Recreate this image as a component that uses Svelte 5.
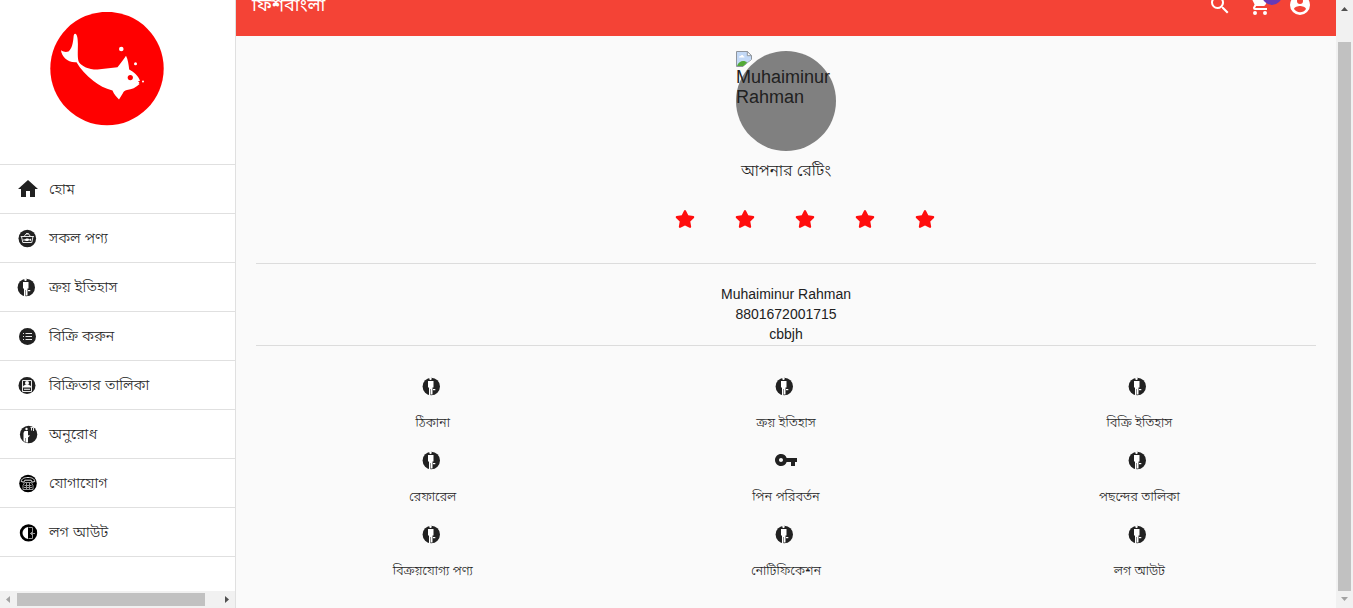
<script>
  const menu = [
    { label: 'হোম', icon: 'home' },
    { label: 'সকল পণ্য', icon: 'basket' },
    { label: 'ক্রয় ইতিহাস', icon: 'person' },
    { label: 'বিক্রি করুন', icon: 'list' },
    { label: 'বিক্রিতার তালিকা', icon: 'seller' },
    { label: 'অনুরোধ', icon: 'request' },
    { label: 'যোগাযোগ', icon: 'phone' },
    { label: 'লগ আউট', icon: 'door' }
  ];
  const tiles = [
    { label: 'ঠিকানা', icon: 'person' },
    { label: 'ক্রয় ইতিহাস', icon: 'person' },
    { label: 'বিক্রি ইতিহাস', icon: 'person' },
    { label: 'রেফারেল', icon: 'person' },
    { label: 'পিন পরিবর্তন', icon: 'key' },
    { label: 'পছন্দের তালিকা', icon: 'person' },
    { label: 'বিক্রয়যোগ্য পণ্য', icon: 'person' },
    { label: 'নোটিফিকেশন', icon: 'person' },
    { label: 'লগ আউট', icon: 'person' }
  ];
  const stars = [1, 2, 3, 4, 5];
</script>

{#snippet glyph(name)}
  <svg class="icon" viewBox="0 0 24 24" aria-hidden="true">
    {#if name === 'home'}
      <path d="M10 20v-6h4v6h5v-8h3L12 3 2 12h3v8z" />
    {:else if name === 'key'}
      <path d="M12.650 10A5.990 5.990 0 0 0 7 6c-3.310 0-6 2.690-6 6s2.690 6 6 6a5.990 5.990 0 0 0 5.650-4H17v4h4v-4h2v-4H12.650zM7 14c-1.100 0-2-.900-2-2s.900-2 2-2 2 .900 2 2-.900 2-2 2z" />
    {:else if name === 'person'}
      <circle cx="10.300" cy="12.500" r="8.700" />
      <circle class="w" cx="9.500" cy="4.700" r="1.200" />
      <path class="w" d="M7 6.900h5.500v6.600H11.500v7H9.800V15h-.5v6.500L8 21v-7.500H7z" />
      <path class="w" d="M12 15h2.300v1.200H12z" />
    {:else if name === 'basket'}
      <circle cx="11.300" cy="12.500" r="8.800" />
      <path class="l" d="M4.700 10.500h13.200M5.500 10.500l1.300 6h9l1.200-6M8 10.500l2-2.500h2.600l2 2.500M10 7.500h2.600" />
      <path class="w" d="m7.500 13 1.300.6 1.500-1h2l.8.8 2-1v2.600l-2-.8-1.300.7h-2l-1-.6-1.300.8z" />
    {:else if name === 'list'}
      <circle cx="11.500" cy="12.500" r="8.500" />
      <path class="l" d="M9.500 9.500h6.500M9.500 12.500h6.500M9.500 15.500h6.500M7 9.500h1M7 12.500h1M7 15.500h1" />
    {:else if name === 'seller'}
      <circle cx="11" cy="12.500" r="8.500" />
      <path class="l" d="M6.500 7.500h9v11h-9z" />
      <circle class="w" cx="11" cy="10" r="2" />
      <path class="w" d="M7 14.500v-1c.5-1.200 2-1.700 4-1.700s3.500.5 4 1.700v1zM8 15.800h6v1H8z" />
    {:else if name === 'request'}
      <circle cx="12.600" cy="12.500" r="8.700" />
      <circle class="w" cx="10.500" cy="7" r="1.200" />
      <path class="w" d="M8.500 9H12v4.500l1.500-.5v1L12 15.500v5H9.500V16H9v4L7.500 18.500V11z" />
      <path class="l" d="M14.500 5.500h3v3.500M15.500 6v2.500" />
    {:else if name === 'phone'}
      <circle class="k" cx="12" cy="12.500" r="8.800" />
      <path class="l" d="M5.200 10.500c0-2.800 3.300-4 6.800-4s6.800 1.200 6.800 4l-2.600.7-1-2H8.800l-1 2z" />
      <path class="g" d="M8.700 11.500h6.600l1.700 3v4h-10v-4zM8.500 14.500h7M8 16.500h8M10.500 12v6M13.500 12v6" />
    {:else}
      <circle class="k" cx="12.500" cy="12.900" r="8.700" />
      <path class="w" d="M12 7v12C8.500 18.300 6.500 16 6.500 13S8.500 7.700 12 7z" />
      <path class="g" d="M12.500 7.500h4v11h-4M14 13.500h5M15.500 12v3" />
    {/if}
  </svg>
{/snippet}

<div class="shell">
  <aside class="sidebar">
    <a class="brand" href="#home" aria-label="ফিশবাংলা">
      <svg viewBox="0 0 114 114" aria-hidden="true">
        <circle cx="57" cy="56.500" r="56.700" fill="#f00" />
        <g fill="#fff">
          <path d="M25.200 21.700c2 .5 2.700 5 2.700 10 0 8-.6 15 1.100 18.500 3 4 9.500 7.400 18.500 7.300L67.500 55.300C71 51 74 47 76 43.800c2 3.500 2.600 9 3.200 13.700 4.500 2.500 8.800 6 10.800 11.200l-2.300.8 1.800.8-.9.900 1 .8c-3.600 3.500-8 5.500-12.600 6-2.500.5-3.500 1.500-4 3L69 87.500c-2.500-3-5-5-6.500-9C55 76.500 49 73.500 43.500 69 36 63 30 56.500 26.500 50.200c-5 .3-8.500-1-11.300-3.700C12.700 44 11.300 41.500 11 38.300c2.500 1.700 5 2 7.500 1.200 3.500-3 4.500-8.500 5-14 .2-2.200.4-3.800 1.700-3.800z" />
          <circle cx="71.300" cy="37" r="2.300" />
          <circle cx="85.500" cy="51.800" r="1.500" />
          <circle cx="93" cy="69.600" r="1" />
        </g>
        <circle cx="80.300" cy="65.600" r="2.600" fill="#f00" />
      </svg>
    </a>
    <nav>
      {#each menu as item}
        <a class="item" href="#menu">{@render glyph(item.icon)}<span>{item.label}</span></a>
      {/each}
    </nav>
    <div class="hbar" aria-hidden="true">
      <svg viewBox="0 0 17 17"><path class="dim" d="M10 5v7L6 8.500z" /></svg>
      <div class="thumb"></div>
      <svg viewBox="0 0 17 17"><path d="M7 5v7l4-3.500z" /></svg>
    </div>
  </aside>

  <div class="page">
    <header>
      <div class="bar">
        <h1>ফিশবাংলা</h1>
        <div class="actions">
          <button aria-label="Search">
            <svg viewBox="0 0 24 24"><path d="M9.500 3A6.500 6.500 0 0 1 16 9.500c0 1.610-.590 3.090-1.560 4.230l.270.270h.790l5 5-1.500 1.500-5-5v-.790l-.270-.270A6.516 6.516 0 0 1 9.500 16a6.500 6.500 0 0 1 0-13m0 2C7 5 5 7 5 9.500S7 14 9.500 14 14 12 14 9.500 12 5 9.500 5z" /></svg>
          </button>
          <button aria-label="Cart">
            <svg viewBox="0 0 24 24"><path d="M17 18a2 2 0 1 1 0 4 2 2 0 0 1 0-4M1 2h3.270l.940 2H20a1 1 0 0 1 1 1c0 .170-.050.340-.120.500l-3.580 6.470c-.340.610-1 1.030-1.750 1.030H8.100l-.900 1.630-.030.120a.25.25 0 0 0 .250.250H19v2H7a2 2 0 0 1-2-2c0-.350.090-.680.240-.960l1.360-2.450L3 4H1V2m6 16a2 2 0 1 1 0 4 2 2 0 0 1 0-4z" /></svg>
            <span class="badge"></span>
          </button>
          <button aria-label="Account">
            <svg viewBox="0 0 24 24"><path d="M12 19.200c-2.500 0-4.710-1.280-6-3.200.030-2 4-3.100 6-3.100s5.970 1.100 6 3.100a7.232 7.232 0 0 1-6 3.200M12 5a3 3 0 1 1 0 6 3 3 0 0 1 0-6m0-3a10 10 0 1 0 0 20 10 10 0 0 0 0-20z" /></svg>
          </button>
        </div>
      </div>
    </header>

    <main>
      <div class="avatar">
        <svg viewBox="0 0 16 16" aria-hidden="true">
          <path d="M.5.5h10.800l4.200 4.200v4L7 15.500H.5z" fill="#c3d9f7" stroke="#8f959d" />
          <path d="M1 15c1-3.500 4-5 6-5s3 .5 4 1.500L7.500 15z" fill="#53aa38" />
          <path d="M3 6.500c0-1.200 1-1.700 1.700-1.500.5-1.300 2.500-1.200 2.700.2 1 0 1.200.7 1 1.300z" fill="#fff" />
          <path d="M11.300.5v4.200h4.200z" fill="#fff" stroke="#8f959d" />
          <path d="m7 16 9-7.500V11l-5.500 5z" fill="#fff" />
        </svg>
        <span>Muhaiminur Rahman</span>
      </div>
      <h2>আপনার রেটিং</h2>
      <div class="stars">
        {#each stars as n}
          <button aria-label={`${n}`}>
            <svg viewBox="0 0 576 512"><path d="M259.300 17.800 194 150.200 47.900 171.500c-26.200 3.800-36.700 36.100-17.700 54.600l105.700 103-25 145.500c-4.500 26.300 23.200 46 46.400 33.700L288 439.600l130.700 68.700c23.200 12.200 50.900-7.400 46.400-33.700l-25-145.500 105.700-103c19-18.500 8.500-50.800-17.700-54.600L382 150.200 316.700 17.800c-11.700-23.600-45.600-23.900-57.400 0z" /></svg>
          </button>
        {/each}
      </div>
      <section class="details">
        <div>Muhaiminur Rahman</div>
        <div>8801672001715</div>
        <div>cbbjh</div>
      </section>
      <section class="tiles">
        {#each tiles as tile}
          <a href="#tile">{@render glyph(tile.icon)}<span>{tile.label}</span></a>
        {/each}
      </section>
    </main>
  </div>

  <div class="vbar" aria-hidden="true">
    <svg viewBox="0 0 17 17"><path d="M5 11h7L8.500 7z" /></svg>
    <div class="thumb"></div>
    <svg viewBox="0 0 17 17"><path class="dim" d="M5 6h7l-3.500 4z" /></svg>
  </div>
</div>

<style>
  :global(body) {
    margin: 0;
  }
  .shell {
    display: grid;
    grid-template-columns: 236px 1fr 17px;
    height: 100vh;
    overflow: hidden;
    font-family: "Liberation Sans", "Noto Sans Bengali", sans-serif;
    font-weight: 300;
    color: #212121;
    background: #fafafa;
  }
  a {
    color: inherit;
    text-decoration: none;
  }
  button {
    border: 0;
    padding: 0;
    background: none;
    color: inherit;
  }
  svg {
    display: block;
    fill: currentColor;
  }
  .icon {
    width: 24px;
    height: 24px;
    flex: none;
  }
  .icon .w {
    fill: #fff;
  }
  .icon .k {
    fill: #000;
  }
  .icon .l {
    fill: none;
    stroke: #e8e8e8;
    stroke-width: 1;
  }
  .icon .g {
    fill: none;
    stroke: #999;
    stroke-width: 1;
  }

  .sidebar {
    display: flex;
    flex-direction: column;
    box-sizing: border-box;
    min-height: 0;
    border-right: 1px solid #e0e0e0;
    background: #fff;
  }
  .brand {
    padding: 12px 0 38px 50px;
    border-bottom: 1px solid #e0e0e0;
  }
  .brand svg {
    width: 114px;
    height: 114px;
  }
  .item {
    display: flex;
    align-items: center;
    gap: 9px;
    height: 48px;
    padding-left: 16px;
    border-bottom: 1px solid #e0e0e0;
    font-size: 15px;
    line-height: 24px;
  }
  .hbar,
  .vbar {
    display: flex;
    background: #f1f1f1;
    color: #505050;
  }
  .hbar svg,
  .vbar svg {
    flex: none;
    width: 17px;
    height: 17px;
  }
  .dim {
    fill: #a3a3a3;
  }
  .hbar {
    margin-top: auto;
  }
  .thumb {
    background: #c1c1c1;
  }
  .hbar .thumb {
    flex: 1;
    margin: 2px 13px 2px 0;
  }
  .vbar {
    flex-direction: column;
  }
  .vbar .thumb {
    flex: 1;
    margin: 25px 2px 0;
  }

  .page {
    min-width: 0;
  }
  header {
    display: flex;
    align-items: flex-end;
    height: 36px;
    overflow: hidden;
    background: #f44336;
    color: #fff;
  }
  .bar {
    display: flex;
    flex: 1;
    align-items: center;
    justify-content: space-between;
    height: 62px;
    padding: 0 24px 0 16px;
  }
  h1 {
    margin: 0;
    font-size: 18px;
    line-height: 28px;
    font-weight: 400;
  }
  .actions {
    display: flex;
    gap: 16px;
  }
  .actions button {
    position: relative;
  }
  .actions svg {
    width: 24px;
    height: 24px;
  }
  .badge {
    position: absolute;
    top: -8px;
    right: -10px;
    width: 20px;
    height: 20px;
    border-radius: 50%;
    background: #673ab7;
  }

  main {
    padding: 15px 20px 0;
    text-align: center;
  }
  .avatar {
    width: 100px;
    height: 100px;
    margin: 0 auto;
    border-radius: 50%;
    background: #808080;
    font-size: 18px;
    line-height: 20px;
    text-align: left;
  }
  .avatar svg {
    width: 16px;
    height: 16px;
  }
  h2 {
    margin: 8px 0 0;
    font-size: 16px;
    line-height: 24px;
    font-weight: 300;
  }
  .stars {
    display: flex;
    justify-content: center;
    gap: 40px;
    padding: 26px 0 34px 38px;
    color: #ff0d0d;
  }
  .stars svg {
    width: 20px;
    height: 20px;
  }
  .details {
    padding: 20px 0 1px;
    border: solid #dcdcdc;
    border-width: 1px 0;
    font-size: 14px;
    line-height: 20px;
  }
  .tiles {
    display: grid;
    grid-template-columns: repeat(3, 1fr);
    padding-top: 28px;
    font-size: 13px;
    line-height: 20px;
  }
  .tiles a {
    display: flex;
    flex-direction: column;
    align-items: center;
    gap: 15px;
    height: 74px;
  }
</style>
